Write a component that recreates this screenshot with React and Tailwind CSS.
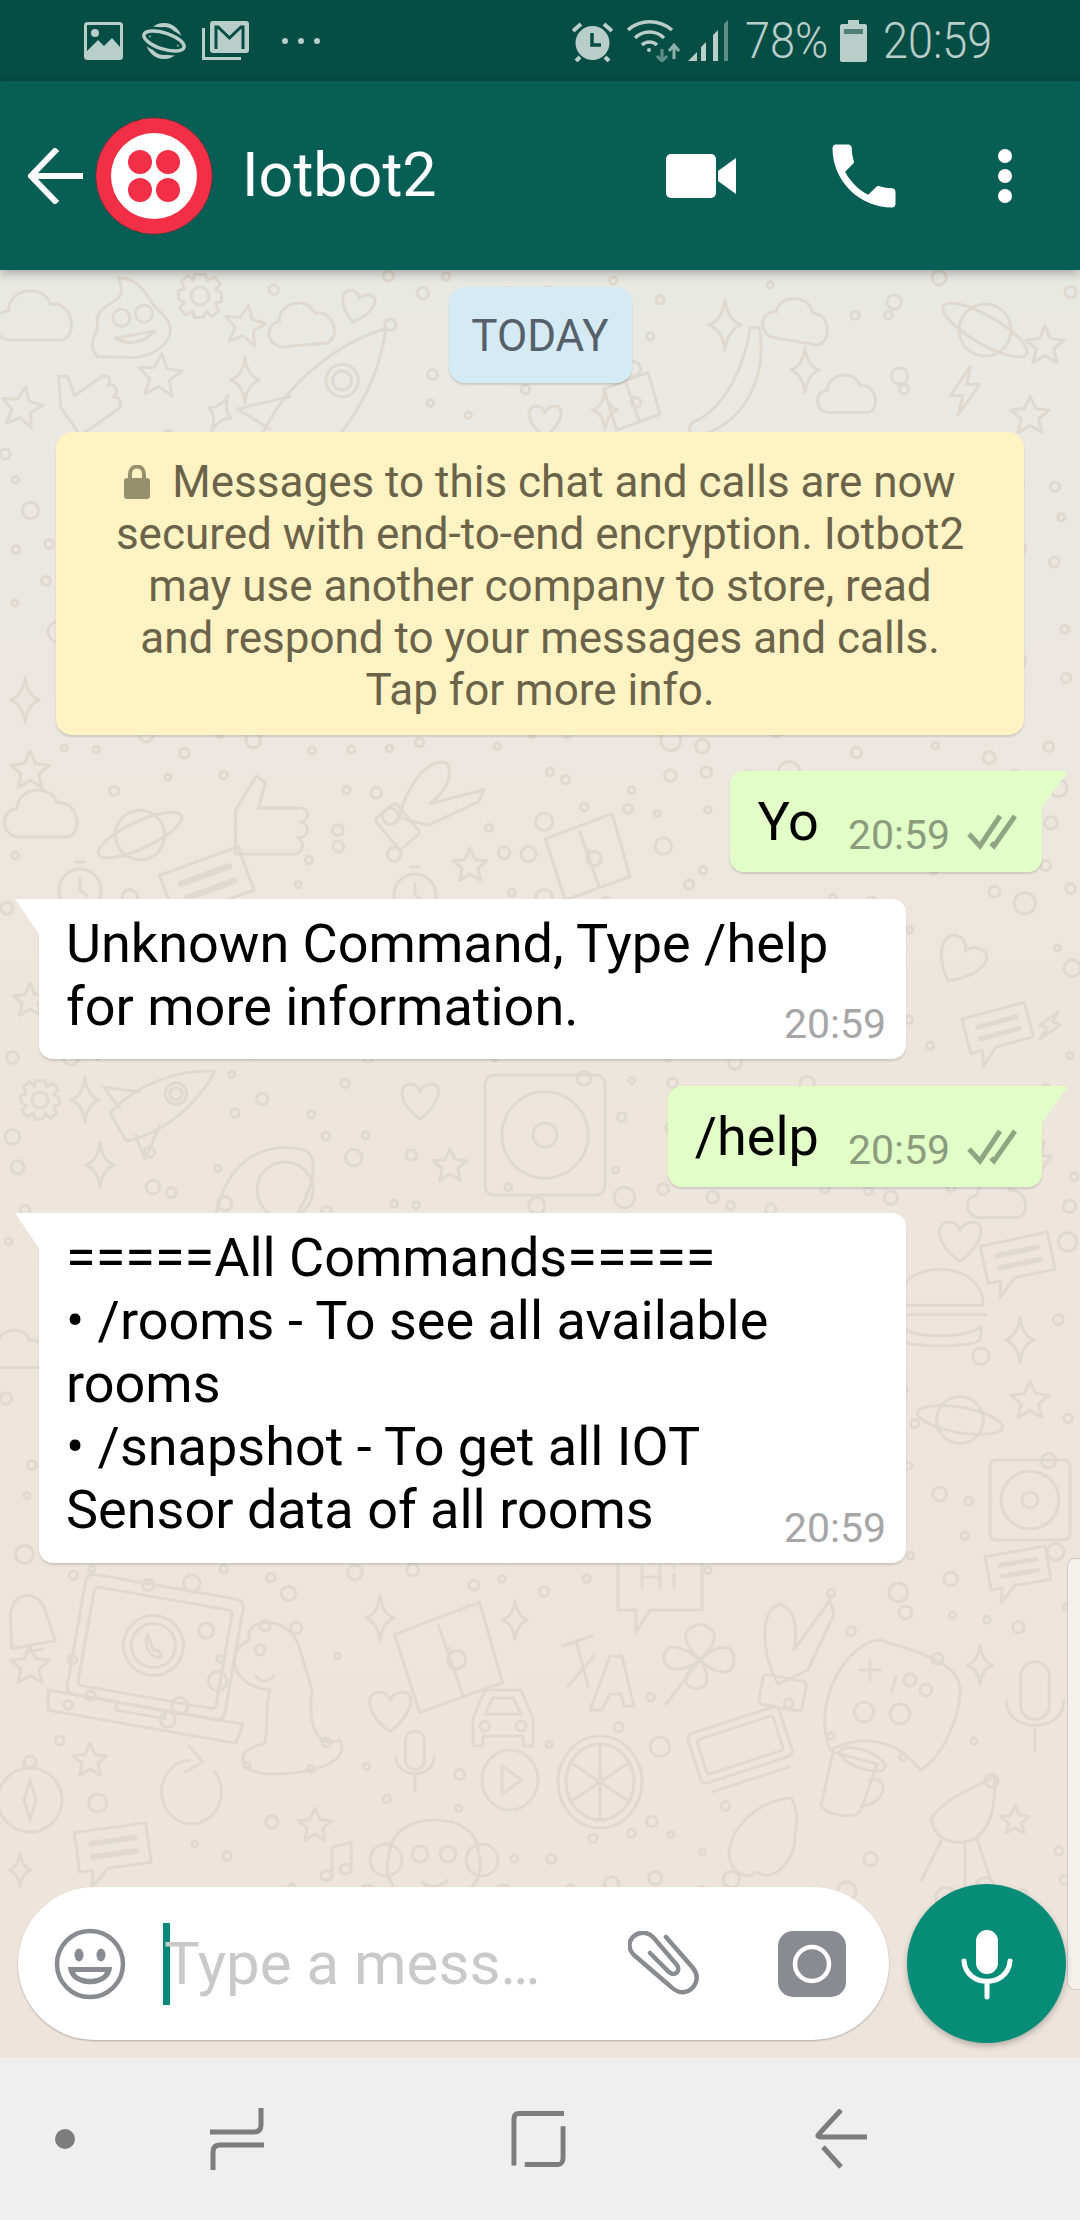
import React from "react";

const FONT = { fontFamily: "Roboto, sans-serif" };

// doodle wallpaper: [symbol, x, y, scale, rotation]
const DOODLES = [
  ["cloud", 38, 317, 1.05, 0], ["gear", 200, 296, 0.9, 0], ["poop", 130, 322, 0.95, -10], ["star", 160, 375, 0.9, 5],
  ["star", 245, 325, 0.85, 10], ["spark", 245, 380, 0.8, 0], ["spark", 220, 413, 0.7, 25], ["cloud", 305, 325, 0.9, -5],
  ["heart", 357, 306, 0.7, 15], ["rocket", 330, 395, 1.35, 40], ["hand", 85, 395, 0.9, -35], ["star", 22, 407, 0.85, 10],
  ["cloud", 800, 322, 0.9, 10], ["spark", 725, 325, 0.9, 0], ["banana", 735, 385, 1.1, 0], ["planet", 985, 330, 1, 30],
  ["star", 1045, 345, 0.8, 0], ["cloud", 850, 395, 0.8, 0], ["spark", 805, 370, 0.8, 0], ["bolt", 965, 390, 0.9, 0],
  ["heart", 545, 420, 0.7, 0], ["spark", 605, 410, 0.7, 0], ["map", 630, 400, 0.6, 0], ["star", 1030, 415, 0.8, 0],
  ["star", 30, 770, 0.8, 0], ["spark", 25, 700, 0.8, 0],
  ["hand", 270, 815, 1.15, 0], ["planet", 140, 835, 0.95, -25], ["cloud", 45, 815, 1, 0], ["star", 470, 865, 0.7, 0],
  ["okhand", 440, 800, 0.9, 40], ["map", 585, 855, 0.9, 0], ["chat", 210, 885, 1.1, -20], ["clock", 415, 895, 0.7, 0], ["clock", 80, 890, 0.7, 0],
  ["star", 30, 1000, 0.7, 0], ["heart", 960, 960, 1, 30], ["chat", 1000, 1030, 0.85, -15], ["bolt", 1050, 1025, 0.6, 20],
  ["gear", 40, 1100, 0.8, 0], ["spark", 85, 1100, 0.8, 0], ["heart", 420, 1100, 0.8, 0], ["rocket", 165, 1100, 0.9, 60],
  ["disc", 545, 1135, 1.2, 0], ["star", 450, 1165, 0.7, 0], ["mouse", 275, 1180, 1, 0], ["spark", 100, 1165, 0.8, 0],
  ["star", 60, 1250, 0.8, 0], ["chat", 1020, 1260, 0.9, -12], ["heart", 960, 1240, 0.9, 0], ["bolt", 1040, 1160, 0.7, 0],
  ["burger", 940, 1310, 1.2, 0], ["cloud", 1000, 1200, 0.8, 0], ["star", 1030, 1400, 0.8, 0], ["planet", 960, 1420, 0.9, 10],
  ["spark", 1020, 1340, 0.8, 0], ["cloud", 20, 1350, 0.8, 0], ["disc", 1030, 1500, 0.8, 0],
  ["bell", 30, 1625, 1, -10], ["star", 30, 1665, 0.8, 0], ["laptop", 155, 1660, 1, 0], ["dino", 300, 1700, 1, 0],
  ["map", 445, 1655, 1.15, 0], ["spark", 380, 1618, 0.8, 0], ["spark", 515, 1620, 0.7, 0], ["car", 503, 1720, 1, 0],
  ["heart", 390, 1710, 0.9, 0], ["letters", 590, 1670, 1, 0], ["clover", 700, 1660, 1, 0], ["hi", 660, 1590, 1, 0],
  ["okhand", 800, 1640, 1, 0], ["pad", 890, 1700, 1, 0], ["spark", 980, 1665, 0.7, 0], ["mic", 1035, 1705, 1.2, 0],
  ["chat", 1020, 1570, 0.8, -10], ["alarm", 740, 1745, 1, -18], ["orange", 600, 1782, 1, 0], ["play", 510, 1780, 1, 0],
  ["mic", 415, 1760, 0.8, 0], ["compass", 30, 1800, 1, 0], ["star", 90, 1760, 0.7, 0], ["refresh", 195, 1790, 1, 0],
  ["cup", 855, 1780, 1, 0], ["croissant", 765, 1840, 1, 0], ["chair", 965, 1825, 1, 0], ["monkey", 430, 1860, 1, 0],
  ["chat", 115, 1850, 0.95, -8], ["star", 315, 1825, 0.7, 0], ["star", 1015, 1820, 0.6, 0], ["note", 340, 1860, 0.8, 0],
  ["spark", 20, 1870, 0.6, 0],
];

// little bubbles on a jittered grid, left out where a doodle already sits
const BUBBLES = (() => {
  const out = [];
  let seed = 11;
  const rand = () => {
    seed = (seed * 9301 + 49297) % 233280;
    return seed / 233280;
  };
  for (let y = 275; y < 1900; y += 38) {
    for (let x = 5; x < 1080; x += 40) {
      const cx = x + rand() * 30;
      const cy = y + rand() * 28;
      const blocked = DOODLES.some(([, dx, dy, s]) => Math.hypot(cx - dx, cy - dy) < 50 * s);
      if (!blocked && rand() > 0.25) out.push({ x: cx, y: cy, r: 3 + rand() * rand() * 9 });
    }
  }
  return out;
})();

function Doodle({ name }) {
  switch (name) {
    case "star":
      return <path d="M0-24 7-8 24-6 11 5 15 22 0 13-15 22-11 5-24-6-7-8Z" />;
    case "spark":
      return <path d="M0-28Q3-5 18 0 3 5 0 28-3 5-18 0-3-5 0-28Z" />;
    case "heart":
      return <path d="M0 24C-30 2-26-20-12-20-5-20 0-14 0-10 0-14 7-20 14-20 28-20 28 2 0 24Z" />;
    case "cloud":
      return <path d="M-28 22C-46 18-44-6-28-6-28-28 6-32 12-12 32-16 40 18 22 22Z" />;
    case "gear":
      return (
        <>
          <circle r="10" />
          <path d="M-6-24H6L8-17 16-21 23-13 17-7 24-3V6L17 8 21 16 13 23 7 17 3 24H-6L-8 17-16 21-23 13-17 7-24 3V-6L-17-8-21-16-13-23-7-17Z" />
        </>
      );
    case "poop":
      return (
        <>
          <path d="M-40 30C-52 12-30 4-34-8-26-30 4-16-4-48 26-40 20-18 34-4 52 20 30 38 0 38Z" />
          <circle cx="-8" cy="-6" r="9" />
          <circle cx="16" cy="-6" r="9" />
          <path d="M-18 14Q2 30 24 14Z" />
        </>
      );
    case "rocket":
      return (
        <>
          <path d="M-18 60C-34 10-16-40 0-64 16-40 34 10 18 60Z" />
          <circle cy="-14" r="12" />
          <circle cy="-14" r="7" />
          <path d="M-22 20-46 52-18 48M22 20 46 52 18 48" />
        </>
      );
    case "hand":
      return (
        <path d="M-30 34V-4L-12-34-4-28-10-6H26C36-6 34 6 26 6 36 8 34 20 24 20 32 24 28 34 20 34Z" />
      );
    case "banana":
      return <path d="M22-52C30-10 10 36-34 46-42 46-44 38-38 34-8 20 8-16 14-52Z" />;
    case "planet":
      return (
        <>
          <circle r="26" />
          <ellipse rx="48" ry="14" />
        </>
      );
    case "bolt":
      return <path d="M6-26-16 6H-2L-8 28 16-6H2Z" />;
    case "map":
      return (
        <>
          <path d="M-44-18 30-46 50 24-22 50Z" />
          <path d="M-6-26 16 36M4-6V-6" />
          <circle cx="10" cy="4" r="8" />
        </>
      );
    case "chat":
      return (
        <>
          <path d="M-40-24H36V18H-10L-30 36-26 18H-40Z" />
          <path d="M-24-10H22M-24 4H22" strokeWidth="6" />
        </>
      );
    case "clock":
      return (
        <>
          <circle r="30" />
          <path d="M0-16V0L10 8M-6-40H6" />
        </>
      );
    case "disc":
      return (
        <>
          <rect x="-50" y="-50" width="100" height="100" rx="8" />
          <circle r="36" />
          <circle r="10" />
        </>
      );
    case "mouse":
      return (
        <>
          <path d="M-60 40C-50-20-10-40 30-30 50-20 30 30 10 50Z" />
          <circle cx="10" cy="10" r="28" />
        </>
      );
    case "burger":
      return (
        <>
          <path d="M-36-4C-36-44 36-44 36-4Z" />
          <path d="M-38 4H38M-34 14C-20 24 20 24 34 14V24C30 32-30 32-34 24Z" />
        </>
      );
    case "bell":
      return <path d="M-22 20C-18 0-22-28 0-30 22-28 18 0 22 20ZM-8 26H8" />;
    case "laptop":
      return (
        <g transform="rotate(10)">
          <rect x="-82" y="-74" width="160" height="122" rx="8" />
          <rect x="-72" y="-62" width="140" height="100" rx="4" />
          <path d="M-100 48H98L94 68H-96ZM-30 48V56H20V48" />
          <circle cx="-4" cy="-14" r="30" />
          <circle cx="-4" cy="-14" r="22" />
          <path d="M-12-24C-14-8-2 0 6-4L2-10-4-10-8-18Z" />
        </g>
      );
    case "dino":
      return (
        <>
          <path d="M-50-60C-60-80-10-90 0-50L12-10C8 20 14 50 40 40 50 60 20 74-30 74-60 74-70 50-36 44-30 30-36 6-30-10-70-14-76-50-50-60Z" />
          <circle cx="-40" cy="-50" r="5" />
          <path d="M-44-24Q-36-14-26-24" />
        </>
      );
    case "car":
      return (
        <>
          <path d="M-30 26V-2L-18-30H18L30-2V26H20V16H-20V26Z" />
          <path d="M-18-6-10-22H10L18-6Z" />
          <circle cx="-18" cy="6" r="5" />
          <circle cx="18" cy="6" r="5" />
        </>
      );
    case "letters":
      return (
        <>
          <path d="M-28-24 2-34M-14-30-2 16M-22 16 4-14" />
          <path d="M0 40 20-14H32L44 36H34L31 24H20L12 40Z" />
        </>
      );
    case "clover":
      return (
        <path d="M0 0C-14-14-24-30 0-36 24-30 14-14 0 0 14-14 34-20 34 0 34 18 14 14 0 0 10 14 10 30-6 28-20 26-14 10 0 0-16 12-36 14-36-4-34-20-14-12 0 0M0 0-34 44" />
      );
    case "hi":
      return (
        <>
          <path d="M-42-36H42V20H-10L-24 42V20H-42Z" />
          <path d="M-18-24V-2M0-24V-2M-18-13H0M14-16V-2M14-24V-22" />
        </>
      );
    case "okhand":
      return (
        <>
          <path d="M-22 44C-40 10-40-30-20-36-4-30-2-10-6 10L30-40 34-26 8 30Z" />
          <rect x="-30" y="40" width="44" height="30" rx="4" transform="rotate(10)" />
        </>
      );
    case "pad":
      return (
        <>
          <path d="M-60 50C-80 0-40-60-10-60 20-50 70-40 70-10 70 20 50 60 30 70 0 30-40 40-60 50Z" />
          <path d="M-30-30H-10M-20-40V-20M6-24 2-8" />
          <circle cx="20" cy="-20" r="6" />
          <circle cx="36" cy="-10" r="6" />
          <circle cx="-26" cy="12" r="10" />
          <circle cx="10" cy="14" r="10" />
        </>
      );
    case "mic":
      return (
        <>
          <rect x="-12" y="-36" width="24" height="48" rx="12" />
          <path d="M-24-4C-24 24 24 24 24-4M0 20V38" />
        </>
      );
    case "alarm":
      return (
        <>
          <rect x="-48" y="-26" width="96" height="52" rx="6" />
          <rect x="-40" y="-18" width="80" height="36" rx="3" />
          <path d="M-40 36H40" />
        </>
      );
    case "orange":
      return (
        <>
          <ellipse rx="42" ry="46" />
          <ellipse rx="34" ry="38" />
          <path d="M0-38V38M-30-20 30 20M-30 20 30-20" />
        </>
      );
    case "play":
      return (
        <>
          <ellipse rx="28" ry="30" />
          <path d="M-8-14 12 0-8 14Z" />
        </>
      );
    case "compass":
      return (
        <>
          <circle r="32" />
          <path d="M0-20 6 0 0 20-6 0Z" />
          <circle cy="-38" r="6" />
        </>
      );
    case "refresh":
      return <path d="M-6-30A30 32 0 1 0 20-18M-6-44 8-28-10-18" />;
    case "cup":
      return (
        <>
          <path d="M-22-28-34 26C-26 36 0 40 6 30L22-16Z" />
          <ellipse cy="-22" rx="24" ry="9" transform="rotate(20)" />
          <path d="M14 0C34-6 34 24 6 26" />
        </>
      );
    case "croissant":
      return (
        <path d="M-34 24C-44-4-10-40 26-42 36-24 30-16 30-2 30 20 8 44-8 32-18 40-28 34-34 24Z" />
      );
    case "chair":
      return (
        <path d="M-34-6C-20-30 20-40 30-50 30-20 28 0 10 14-10 22-30 16-34-6ZM-24 16-44 56M0 18V62M12 14 26 56" />
      );
    case "monkey":
      return (
        <>
          <circle cx="-44" cy="0" r="16" />
          <circle cx="52" cy="0" r="16" />
          <path d="M-40-10C-36-50 46-50 48-10 60 30 20 44 4 44-20 44-52 30-40-10Z" />
          <circle cx="-10" cy="-6" r="8" />
          <circle cx="18" cy="-6" r="8" />
          <path d="M-8 22Q4 32 18 20" />
        </>
      );
    case "note":
      return <path d="M-10 20V-16L14-22V12M-10 20A7 6 0 1 1-10 19M14 12A7 6 0 1 1 14 11" />;
    default:
      return null;
  }
}

function Wallpaper() {
  return (
    <svg className="absolute left-0 top-0 h-[1788px] w-[1080px]" viewBox="0 270 1080 1788" fill="none" stroke="#dfd9cf" strokeWidth="3" strokeLinejoin="round" strokeLinecap="round">
      {BUBBLES.map((b, i) => (
        <circle key={i} cx={b.x} cy={b.y} r={b.r} />
      ))}
      {DOODLES.map(([name, x, y, s, r], i) => (
        <g key={i} transform={`translate(${x} ${y}) rotate(${r}) scale(${s})`} strokeWidth={3 / s}>
          <Doodle name={name} />
        </g>
      ))}
    </svg>
  );
}

function StatusBar() {
  return (
    <div className="relative flex h-[81px] items-center bg-[#064d44] pl-[84px] pr-[90px] text-[#b9cdc9]">
      {/* gallery */}
      <svg width="39" height="38" viewBox="0 0 39 38">
        <rect x="1.5" y="1.5" width="36" height="35" rx="2" fill="#064d44" stroke="#b9cdc9" strokeWidth="3" />
        <circle cx="11" cy="11" r="4" fill="#b9cdc9" />
        <path d="M3 29 14 18 20 24 28 16 36 25V36H3Z" fill="#b9cdc9" />
      </svg>
      {/* planet */}
      <svg width="47" height="38" viewBox="0 0 47 38" className="ml-[18px]" fill="none">
        <circle cx="23" cy="19" r="16" stroke="#b9cdc9" strokeWidth="4" />
        <ellipse cx="23" cy="19" rx="21" ry="8" transform="rotate(18 23 19)" stroke="#064d44" strokeWidth="9" />
        <ellipse cx="23" cy="19" rx="21" ry="8" transform="rotate(18 23 19)" stroke="#b9cdc9" strokeWidth="3.5" />
      </svg>
      {/* mail stack */}
      <svg width="47" height="39" viewBox="0 0 47 39" className="ml-[14px]">
        <rect x="8" y="0" width="39" height="32" rx="3" fill="#b9cdc9" />
        <path d="M14 28V6H16L27.5 17 39 6H41V28" fill="none" stroke="#064d44" strokeWidth="3" />
        <path d="M1.5 7V37.5H39" fill="none" stroke="#b9cdc9" strokeWidth="3" />
      </svg>
      <svg width="38" height="8" viewBox="0 0 38 8" className="ml-[33px]">
        <circle cx="3" cy="4" r="3" fill="#b9cdc9" />
        <circle cx="19" cy="4" r="3" fill="#b9cdc9" />
        <circle cx="35" cy="4" r="3" fill="#b9cdc9" />
      </svg>

      <div className="ml-auto flex items-center">
        {/* alarm */}
        <svg width="41" height="42" viewBox="0 0 41 42">
          <circle cx="20.5" cy="23" r="17" fill="#b9cdc9" />
          <path d="M20 13V25H29" fill="none" stroke="#064d44" strokeWidth="3.5" />
          <path d="M1 11 9 4M40 11 32 4M8 37 4 41M33 37 37 41" stroke="#b9cdc9" strokeWidth="4" />
        </svg>
        {/* wifi */}
        <svg width="53" height="42" viewBox="0 0 53 42" className="ml-[14px]" fill="none" stroke="#b9cdc9" strokeWidth="3.5">
          <path d="M1 10C13-1 32-1 45 10" />
          <path d="M8 18C16 10 29 10 37 18" />
          <path d="M15 25C19 21 26 21 30 25" />
          <circle cx="22" cy="30" r="2" fill="#b9cdc9" stroke="none" />
          <path d="M47 39V26M42 31 47 25 52 31" strokeWidth="3" stroke="#8fb0aa" />
          <path d="M35 29V41M30 36 35 41 40 36" strokeWidth="3" stroke="#5f8f87" />
        </svg>
        {/* signal */}
        <svg width="40" height="42" viewBox="0 0 40 42" className="ml-[8px]">
          <path d="M0 41 9 32V41ZM13 41V27L18 22V41ZM25 41V15L30 10V41Z" fill="#b9cdc9" />
          <path d="M36 41V4L40 0V41Z" fill="#5f8f87" />
        </svg>
        <span style={FONT} className="ml-[17px] w-[80px] origin-left scale-x-[0.9] whitespace-nowrap text-[50px] font-light leading-none">78%</span>
        {/* battery */}
        <svg width="27" height="42" viewBox="0 0 27 42" className="ml-[15px]">
          <path d="M8 0H19V4H25C26 4 27 5 27 6V40C27 41 26 42 25 42H2C1 42 0 41 0 40V6C0 5 1 4 2 4H8Z" fill="#b9cdc9" />
          <rect x="4" y="9" width="19" height="5" fill="#4f7f77" />
        </svg>
        <span style={FONT} className="ml-[16px] w-[107px] origin-left scale-x-[0.9] whitespace-nowrap text-[50px] font-light leading-none">20:59</span>
      </div>
    </div>
  );
}

function Header() {
  return (
    <div className="relative z-10 flex h-[189px] items-center bg-[#075e54] pl-[28px] shadow-[0_3px_10px_rgba(0,0,0,0.3)]">
      <svg width="56" height="56" viewBox="0 0 56 56" fill="none" stroke="#fff" strokeWidth="6">
        <path d="M55 28H4M29 1 3 28 29 55" />
      </svg>
      {/* twilio logo */}
      <div className="ml-[11px] flex h-[118px] w-[118px] items-center justify-center rounded-full border border-[#33403f] bg-[#f22f46]">
        <div className="grid h-[86px] w-[86px] grid-cols-[24px_24px] place-content-center gap-[4px] rounded-full bg-white">
          <div className="h-[24px] w-[24px] rounded-full bg-[#f22f46]" />
          <div className="h-[24px] w-[24px] rounded-full bg-[#f22f46]" />
          <div className="h-[24px] w-[24px] rounded-full bg-[#f22f46]" />
          <div className="h-[24px] w-[24px] rounded-full bg-[#f22f46]" />
        </div>
      </div>
      <span style={FONT} className="ml-[29px] text-[61px] leading-none text-white">Iotbot2</span>

      <svg width="70" height="44" viewBox="0 0 70 44" className="ml-auto" fill="#fff">
        <rect x="0" y="0" width="50" height="44" rx="5" />
        <path d="M52 17 70 4V40L52 27Z" />
      </svg>
      <svg width="84" height="84" viewBox="0 0 24 24" className="ml-[86px]" fill="#fff">
        <path d="M6.62 10.79c1.44 2.83 3.76 5.14 6.59 6.59l2.2-2.2c.27-.27.67-.36 1.02-.24 1.12.37 2.33.57 3.57.57.55 0 1 .45 1 1V20c0 .55-.45 1-1 1-9.39 0-17-7.61-17-17 0-.55.45-1 1-1h3.5c.55 0 1 .45 1 1 0 1.25.2 2.45.57 3.57.11.35.03.74-.25 1.02l-2.2 2.2z" />
      </svg>
      <div className="ml-[92px] mr-[68px] flex flex-col gap-[6px]">
        <div className="h-[14px] w-[14px] rounded-full bg-white" />
        <div className="h-[14px] w-[14px] rounded-full bg-white" />
        <div className="h-[14px] w-[14px] rounded-full bg-white" />
      </div>
    </div>
  );
}

function Ticks() {
  return (
    <svg width="50" height="36" viewBox="0 0 50 36" fill="none" stroke="#8fa583" strokeWidth="5" className="ml-[17px]">
      <path d="M2 20 13 32 33 2" />
      <path d="M24 29 27 32 48 2" />
    </svg>
  );
}

function Outgoing({ text, mt }) {
  return (
    <div className={`relative mr-[38px] flex h-[101px] items-start self-end rounded-b-[14px] rounded-tl-[14px] bg-[#e2ffc7] pl-[27px] pr-[25px] shadow-[0_2px_2px_rgba(0,0,0,0.13)] ${mt}`}>
      <svg width="28" height="39" viewBox="0 0 28 39" className="absolute left-full top-0 -ml-[2px]">
        <path d="M0 0H24C26 0 27 2 26 3L0 39Z" fill="#e2ffc7" />
      </svg>
      <span style={FONT} className="mt-[19px] text-[54px] leading-[63px] text-black">{text}</span>
      <span style={FONT} className="ml-[29px] mt-[39px] text-[41px] leading-[50px] text-[#8a9c7d]">20:59</span>
      <div className="mt-[43px]">
        <Ticks />
      </div>
    </div>
  );
}

function Incoming({ lines, mt, h }) {
  return (
    <div className={`relative ml-[39px] grid w-[867px] self-start rounded-b-[14px] rounded-tr-[14px] bg-white pb-[10px] pl-[27px] pr-[20px] pt-[13px] shadow-[0_2px_2px_rgba(0,0,0,0.13)] ${mt} ${h}`}>
      <svg width="28" height="38" viewBox="0 0 28 38" className="absolute right-full top-0 -mr-[2px]">
        <path d="M28 0H2L28 38Z" fill="#fff" />
      </svg>
      <div style={FONT} className="col-start-1 row-start-1 whitespace-nowrap text-[54px] leading-[63px] text-black">
        {lines.map((l) => (
          <div key={l}>{l}</div>
        ))}
      </div>
      <span style={FONT} className="col-start-1 row-start-1 self-end justify-self-end text-[41px] leading-[50px] text-[#a6a6a6]">20:59</span>
    </div>
  );
}

function Composer() {
  return (
    <div className="mt-auto mb-[15px] flex items-center pl-[18px] pr-[14px]">
      <div className="flex h-[153px] w-[871px] items-center rounded-full bg-white pl-[36px] pr-[43px] shadow-[0_1px_2px_rgba(0,0,0,0.25)]">
        <svg width="72" height="72" viewBox="0 0 72 72" fill="none" stroke="#888c91" strokeWidth="4.5">
          <circle cx="36" cy="36" r="33" />
          <ellipse cx="25" cy="27" rx="4.5" ry="6.5" fill="#888c91" stroke="none" />
          <ellipse cx="47" cy="27" rx="4.5" ry="6.5" fill="#888c91" stroke="none" />
          <path d="M14 39H58C57 62 15 62 14 39Z" fill="#888c91" stroke="none" />
          <path d="M21 44H51C48 53 24 53 21 44Z" fill="#fff" stroke="none" />
        </svg>
        <div className="ml-[37px] h-[82px] w-[7px] bg-[#00897b]" />
        <span style={FONT} className="relative ml-[-6px] whitespace-nowrap text-[60px] leading-none text-[#c9c9c9]">Type a mess…</span>
        <svg width="72" height="66" viewBox="0 0 72 66" className="ml-auto" fill="none" stroke="#888c91" strokeWidth="4.5" strokeLinecap="round">
          <path d="M38 6 65 37C72 46 68 56 60 60 54 63 47 60 42 55L6 24C0 18 0 10 6 5 12 0 20 1 25 6L49 34C53 40 47 46 41 41L22 22" />
        </svg>
        <svg width="68" height="66" viewBox="0 0 68 66" className="ml-[78px]">
          <rect width="68" height="66" rx="15" fill="#888c91" />
          <circle cx="34" cy="33" r="17" fill="none" stroke="#fff" strokeWidth="4.5" />
        </svg>
      </div>
      <div className="ml-[18px] flex h-[159px] w-[159px] items-center justify-center rounded-full bg-[#078c78] shadow-[0_3px_6px_rgba(0,0,0,0.25)]">
        <svg width="52" height="72" viewBox="0 0 52 72" fill="none" stroke="#fff" strokeWidth="5" strokeLinecap="round">
          <rect x="15" y="2" width="22" height="44" rx="11" fill="#fff" stroke="none" />
          <path d="M3 33C5 60 47 60 49 33M26 54V69" />
        </svg>
      </div>
    </div>
  );
}

function NavBar() {
  return (
    <div className="flex h-[162px] items-center bg-[#efefef] pl-[55px]">
      <div className="h-[20px] w-[20px] rounded-full bg-[#7d7d7d]" />
      <svg width="54" height="62" viewBox="0 0 54 62" className="ml-[135px]" fill="none" stroke="#7d7d7d" strokeWidth="5">
        <path d="M0 24H44C49 24 51 21 51 17V0" />
        <path d="M54 37H10C5 37 3 40 3 44V62" />
      </svg>
      <svg width="55" height="58" viewBox="0 0 56 58" className="ml-[247px]" fill="none" stroke="#7d7d7d" strokeWidth="5">
        <path d="M3 56V8C3 5 5 3 8 3H54" />
        <path d="M53 16V48C53 52 51 55 48 55H14" />
      </svg>
      <svg width="52" height="60" viewBox="0 0 52 60" className="ml-[249px]" fill="none" stroke="#7d7d7d" strokeWidth="5">
        <path d="M26 1 4 25C2 27 3 28 6 28H52" />
        <path d="M8 38 26 58" />
      </svg>
    </div>
  );
}

export default function App() {
  return (
    <div className="flex h-[2220px] w-[1080px] flex-col overflow-hidden">
      <StatusBar />
      <Header />
      <div className="relative flex flex-1 flex-col bg-gradient-to-b from-[#e9e9e4] via-[#ede6dd] via-40% to-[#ede5dc]">
        <Wallpaper />
        {/* edge panel handle */}
        <div className="absolute right-0 top-[1288px] h-[432px] w-[13px] rounded-l-[8px] border border-r-0 border-[#cfcbc5] bg-[#f4f1ec]" />

        <div className="relative flex flex-1 flex-col">
          <div style={FONT} className="mt-[17px] flex h-[96px] w-[183px] items-center justify-center self-center rounded-[16px] bg-[#d4eaf4] pt-[2px] text-[44px] text-[#56606a] shadow-[0_2px_2px_rgba(0,0,0,0.13)]">
            TODAY
          </div>

          <div style={FONT} className="mx-[56px] mt-[49px] flex h-[303px] flex-col items-center justify-center rounded-[16px] bg-[#fff3c4] pt-[4px] text-center text-[44px] leading-[52px] text-[#6b6349] shadow-[0_2px_2px_rgba(0,0,0,0.13)]">
            <div className="flex items-center">
              <svg width="26" height="34" viewBox="0 0 26 34" className="mr-[22px]">
                <path d="M6 14V9C6-1 20-1 20 9V14" fill="none" stroke="#96906f" strokeWidth="4" />
                <rect y="13" width="26" height="21" rx="3" fill="#96906f" />
              </svg>
              Messages to this chat and calls are now
            </div>
            <div>secured with end-to-end encryption. Iotbot2</div>
            <div>may use another company to store, read</div>
            <div>and respond to your messages and calls.</div>
            <div>Tap for more info.</div>
          </div>

          <Outgoing text="Yo" mt="mt-[36px]" />
          <Incoming lines={["Unknown Command, Type /help", "for more information."]} mt="mt-[27px]" h="h-[160px]" />
          <Outgoing text="/help" mt="mt-[27px]" />
          <Incoming
            lines={[
              "=====All Commands=====",
              "• /rooms - To see all available",
              "rooms",
              "• /snapshot - To get all IOT",
              "Sensor data of all rooms",
            ]}
            mt="mt-[26px]"
            h="h-[350px]"
          />
          <Composer />
        </div>
      </div>
      <NavBar />
    </div>
  );
}
